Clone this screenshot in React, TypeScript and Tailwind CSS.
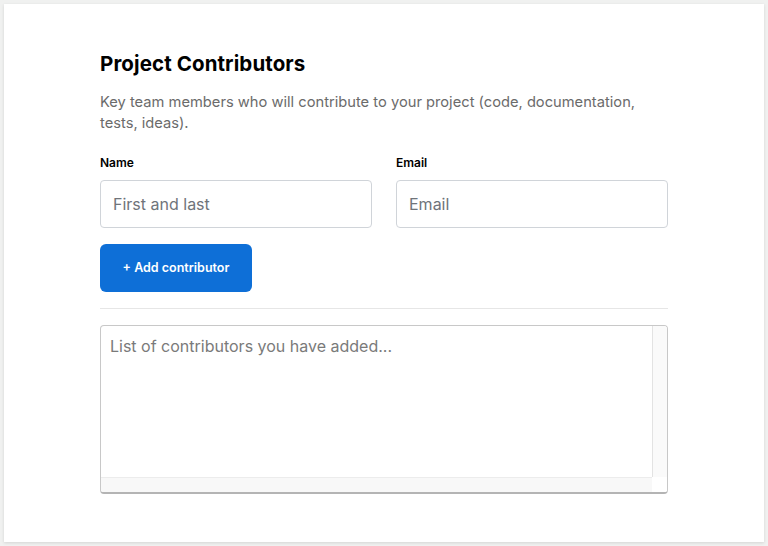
import React from 'react';

const App: React.FC = () => {
    return (
        <div className="min-h-[546px] bg-[#f0f1f0] p-1 font-['Inter',sans-serif]">
            <div className="h-[538px] bg-white shadow-[0_1px_3px_rgba(0,0,0,0.12)] px-24 pt-[46px]">
                <h2 className="text-[20.5px] leading-7 font-bold tracking-[0.1px] text-black">Project Contributors</h2>
                <p className="mt-[14px] text-[14.7px] leading-[21px] text-[#6b6b6b]">
                    Key team members who will contribute to your project (code, documentation, tests, ideas).
                </p>
                <div className="mt-[21px] grid grid-cols-2 gap-6">
                    <label className="flex flex-col">
                        <span className="text-[12px] leading-4 font-semibold text-black">Name</span>
                        <input
                            className="mt-[9px] h-12 rounded border border-[#d0d4d9] px-3 text-[16px] text-gray-700 placeholder:text-[#6f747a] outline-none"
                            placeholder="First and last"
                        />
                    </label>
                    <label className="flex flex-col">
                        <span className="text-[12px] leading-4 font-semibold text-black">Email</span>
                        <input
                            className="mt-[9px] h-12 rounded border border-[#d0d4d9] px-3 text-[16px] text-gray-700 placeholder:text-[#6f747a] outline-none"
                            placeholder="Email"
                        />
                    </label>
                </div>
                <button className="mt-4 h-12 w-[152px] rounded-md bg-[#0e6fd7] text-[12.5px] font-semibold text-white">
                    + Add contributor
                </button>
                <div className="mt-4 border-t border-[#e6e6e6]" />
                {/* textarea with classic scrollbars */}
                <div className="mt-4 grid h-[169px] grid-cols-[1fr_15px] grid-rows-[1fr_15px] overflow-hidden rounded border border-[#c8c8c8] border-b-[#b4b4b4] border-b-2">
                    <textarea
                        className="block resize-none overflow-hidden px-[9px] py-[8px] text-[16px] leading-6 placeholder:text-[#7a7a7a] outline-none"
                        placeholder="List of contributors you have added..."
                    />
                    <div className="border-l border-[#e3e3e3] bg-[#fafafa]" />
                    <div className="border-t border-[#ececec] bg-[#f8f8f8]" />
                    <div className="bg-white" />
                </div>
            </div>
        </div>
    );
};

export default App;
